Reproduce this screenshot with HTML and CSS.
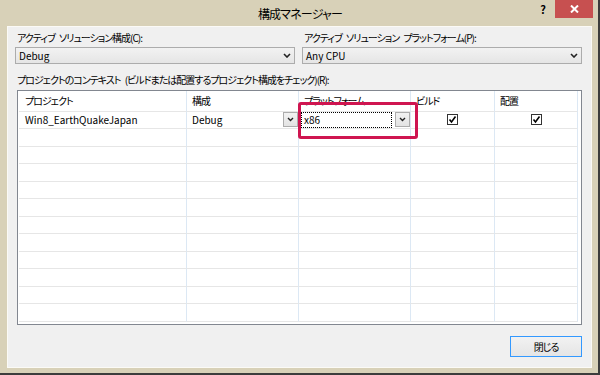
FILE: index.html
```html
<!DOCTYPE html>
<html lang="ja">
<head>
    <meta charset="UTF-8">
    <title>構成マネージャー</title>
    <link rel="stylesheet" href="styles.css">
</head>
<body>
    <div class="window">
        <div class="titlebar">
            <div></div>
            <div class="title">構成マネージャー</div>
            <div class="controls">
                <span class="help">?</span>
                <span class="close">
                    <svg width="9" height="8" viewBox="0 0 9 8"><path d="M1 0.5l7 7M8 0.5l-7 7" stroke="#fff" stroke-width="2"/></svg>
                </span>
            </div>
        </div>

        <div class="client">
            <div class="selectors">
                <div class="field">
                    <div class="label">アクティブ ソリューション構成(C):</div>
                    <div class="combo">
                        <span>Debug</span>
                        <svg class="chev" width="8" height="5" viewBox="0 0 8 5"><path d="M1 1l3 3 3-3" fill="none" stroke="#222" stroke-width="1.6"/></svg>
                    </div>
                </div>
                <div class="field">
                    <div class="label">アクティブ ソリューション プラットフォーム(P):</div>
                    <div class="combo">
                        <span>Any CPU</span>
                        <svg class="chev" width="8" height="5" viewBox="0 0 8 5"><path d="M1 1l3 3 3-3" fill="none" stroke="#222" stroke-width="1.6"/></svg>
                    </div>
                </div>
            </div>

            <div class="label context">プロジェクトのコンテキスト (ビルドまたは配置するプロジェクト構成をチェック)(R):</div>

            <div class="grid">
                <div class="row head">
                    <div class="cell first">プロジェクト</div>
                    <div class="cell">構成</div>
                    <div class="cell">プラットフォーム</div>
                    <div class="cell">ビルド</div>
                    <div class="cell">配置</div>
                </div>
                <div class="row">
                    <div class="cell first">Win8_EarthQuakeJapan</div>
                    <div class="cell config">
                        <span>Debug</span>
                        <span class="drop"><svg width="7" height="5" viewBox="0 0 7 5"><path d="M1 1l2.5 2.5 2.5-2.5" fill="none" stroke="#222" stroke-width="1.4"/></svg></span>
                    </div>
                    <div class="cell platform">
                        <span class="edit">x86</span>
                        <span class="drop"><svg width="7" height="5" viewBox="0 0 7 5"><path d="M1 1l2.5 2.5 2.5-2.5" fill="none" stroke="#222" stroke-width="1.4"/></svg></span>
                    </div>
                    <div class="cell check"><span class="box"><svg width="9" height="9" viewBox="0 0 9 9"><path d="M1.5 4.5l2 2.5 4-5.5" fill="none" stroke="#000" stroke-width="1.6"/></svg></span></div>
                    <div class="cell check"><span class="box"><svg width="9" height="9" viewBox="0 0 9 9"><path d="M1.5 4.5l2 2.5 4-5.5" fill="none" stroke="#000" stroke-width="1.6"/></svg></span></div>
                </div>
                <div class="row"><div class="cell"></div><div class="cell"></div><div class="cell"></div><div class="cell"></div><div class="cell"></div></div>
                <div class="row"><div class="cell"></div><div class="cell"></div><div class="cell"></div><div class="cell"></div><div class="cell"></div></div>
                <div class="row"><div class="cell"></div><div class="cell"></div><div class="cell"></div><div class="cell"></div><div class="cell"></div></div>
                <div class="row"><div class="cell"></div><div class="cell"></div><div class="cell"></div><div class="cell"></div><div class="cell"></div></div>
                <div class="row"><div class="cell"></div><div class="cell"></div><div class="cell"></div><div class="cell"></div><div class="cell"></div></div>
                <div class="row"><div class="cell"></div><div class="cell"></div><div class="cell"></div><div class="cell"></div><div class="cell"></div></div>
                <div class="row"><div class="cell"></div><div class="cell"></div><div class="cell"></div><div class="cell"></div><div class="cell"></div></div>
                <div class="row"><div class="cell"></div><div class="cell"></div><div class="cell"></div><div class="cell"></div><div class="cell"></div></div>
                <div class="row"><div class="cell"></div><div class="cell"></div><div class="cell"></div><div class="cell"></div><div class="cell"></div></div>
                <div class="row"><div class="cell"></div><div class="cell"></div><div class="cell"></div><div class="cell"></div><div class="cell"></div></div>
                <div class="row"><div class="cell"></div><div class="cell"></div><div class="cell"></div><div class="cell"></div><div class="cell"></div></div>

                <!-- highlight around the platform combo -->
                <div class="highlight"></div>
            </div>

            <div class="footer">
                <button class="btn">閉じる</button>
            </div>
        </div>
    </div>
</body>
</html>
```

FILE: styles.css
```css
* {
    box-sizing: border-box;
}
body {
    margin: 0;
    width: 600px;
    height: 375px;
    overflow: hidden;
    background-color: #3c3c3c;
    font-family: "Noto Sans CJK JP", "Noto Sans", sans-serif;
    font-feature-settings: "palt";
    font-size: 10px;
    color: #000;
}
.window {
    width: 598px;
    height: 373px;
    background-color: #d8d1b8;
    display: flex;
    flex-direction: column;
    padding: 0 6px 5px 7px;
}
.titlebar {
    height: 26px;
    flex: none;
    display: grid;
    grid-template-columns: 1fr auto 1fr;
    margin-right: -1px;
}
.title {
    font-size: 12px;
    letter-spacing: -0.8px;
    line-height: 26px;
    padding-top: 1px;
}
.controls {
    justify-self: end;
    display: flex;
    align-items: flex-start;
}
.help {
    font-weight: bold;
    font-size: 11px;
    line-height: 18px;
    margin-right: 9px;
}
.close {
    width: 38px;
    height: 18px;
    background-color: #c75050;
    display: flex;
    justify-content: center;
    align-items: center;
}
.client {
    flex: 1;
    background-color: #f0f0f0;
    border: 1px solid #fbfaf6;
    padding: 4px 8px 0 7px;
    display: flex;
    flex-direction: column;
}
.selectors {
    display: grid;
    grid-template-columns: 280px 280px;
    column-gap: 7px;
}
.label {
    line-height: 14px;
    padding-left: 2px;
    letter-spacing: -1px;
    word-spacing: 3px;
    white-space: nowrap;
}
.combo {
    margin-top: 2px;
    height: 17px;
    border: 1px solid #acacac;
    background: linear-gradient(#f2f2f2, #e5e5e5);
    display: flex;
    justify-content: space-between;
    align-items: center;
    padding: 0 3px 0 3px;
}
.context {
    margin-top: 9px;
}
.grid {
    position: relative;
    margin-top: 3px;
    margin-left: 2px;
    width: 565px;
    height: 235px;
    border: 1px solid #828790;
    background-color: #fff;
    padding: 0 3px 0 1px;
    overflow: hidden;
}
.row {
    display: grid;
    grid-template-columns: 168px 112px 112px 84px 83px;
    height: 17.5px;
}
.row.head {
    height: 20.5px;
    letter-spacing: -1px;
}
.cell {
    border-right: 1px solid #dce8f4;
    border-bottom: 1px solid #e6e6e6;
    display: flex;
    align-items: center;
    padding-left: 5px;
    white-space: nowrap;
}
.cell.first {
    padding-left: 6px;
}
.cell.config {
    justify-content: space-between;
}
.cell.platform {
    padding-left: 2px;
    gap: 3px;
}
.cell.check {
    justify-content: center;
    padding-left: 0;
}
.drop {
    width: 15px;
    height: 15px;
    border: 1px solid #acacac;
    background: linear-gradient(#f2f2f2, #e3e3e3);
    display: flex;
    justify-content: center;
    align-items: center;
    flex: none;
}
.edit {
    flex: 1;
    height: 16px;
    border: 1px dotted #000;
    background-color: #fff;
    padding-left: 2px;
    line-height: 14px;
}
.box {
    width: 11px;
    height: 11px;
    border: 1px solid #333;
    background-color: #fff;
    display: flex;
    justify-content: center;
    align-items: center;
}
.highlight {
    position: absolute;
    left: 280px;
    top: 11px;
    width: 120px;
    height: 37px;
    border: 3px solid #cf1550;
    border-radius: 3px;
}
.footer {
    display: flex;
    justify-content: flex-end;
    margin-top: 11px;
    padding-right: 1px;
}
.btn {
    width: 72px;
    height: 21px;
    border: 1px solid #3399ff;
    background: linear-gradient(#f2f2f2, #e5e5e5);
    font-family: inherit;
    font-feature-settings: "palt";
    font-size: 10px;
    letter-spacing: -1px;
    color: #000;
    padding: 0;
}
```
